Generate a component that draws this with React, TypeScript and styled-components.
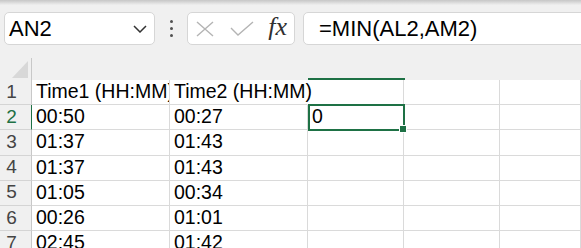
import React, { FunctionComponent } from 'react'
import styled, { createGlobalStyle } from 'styled-components'

const GlobalStyle = createGlobalStyle`
  html, body {
    margin: 0;
    padding: 0;
    background: #ffffff;
    overflow: hidden;
    font-family: 'Liberation Sans', Arial, sans-serif;
  }
`

const Page = styled.div`
  width: 581px;
  height: 248px;
  overflow: hidden;
  background: #f0f0f0;
`

const TopShade = styled.div`
  height: 5px;
  background: linear-gradient(#c6c6c6, #efefef);
`

const Toolbar = styled.div`
  display: flex;
  align-items: center;
  height: 33px;
  padding: 7px 0 0 4px;
`

const Box = styled.div<{ $width?: number }>`
  box-sizing: border-box;
  height: 33px;
  display: flex;
  align-items: center;
  background: #ffffff;
  border: 1px solid #d6d6d6;
  border-radius: 5px;
  ${(p) => (p.$width ? `width: ${p.$width}px; flex: none;` : 'flex: 1; margin-right: -12px;')}
`

const NameText = styled.span`
  flex: 1;
  padding-left: 4px;
  font-size: 22px;
  color: #000;
`

const Chevron = styled.svg`
  margin-right: 7px;
`

const Dots = styled.div`
  width: 32px;
  display: flex;
  flex-direction: column;
  align-items: center;
  gap: 4px;
  & > span {
    width: 3px;
    height: 3px;
    border-radius: 50%;
    background: #505050;
  }
`

const FxBox = styled(Box)`
  justify-content: space-between;
  padding: 0 7px 0 7px;
  margin-right: 8px;
`

const Fx = styled.span`
  font-family: 'Liberation Serif', 'DejaVu Serif', serif;
  font-style: italic;
  font-size: 26px;
  color: #303030;
  margin-top: -3px;
`

const Formula = styled.span`
  padding-left: 15px;
  font-size: 22px;
  color: #000;
`

const HeaderRow = styled.div`
  display: grid;
  grid-template-columns: 32px 138px 138px 97px 96px 1fr;
  height: 34px;
  margin-top: 1px;
  align-items: end;
`

const Corner = styled.div`
  position: relative;
  box-sizing: border-box;
  height: 22px;
  border-right: 1px solid #c8c8c8;
  &::after {
    content: '';
    position: absolute;
    right: 3px;
    bottom: 2px;
    width: 0;
    height: 0;
    border-left: 16px solid transparent;
    border-bottom: 17px solid #d8d8d8;
  }
`

const ColMark = styled.div<{ $active?: boolean }>`
  height: 2px;
  background: ${(p) => (p.$active ? '#1e7145' : 'transparent')};
`

const Sheet = styled.div`
  display: grid;
  grid-template-columns: 32px 138px 138px 96px 96px 1fr;
  grid-auto-rows: 25.2px;
  background: #ffffff;
`

const RowHead = styled.div<{ $active?: boolean }>`
  box-sizing: border-box;
  display: flex;
  align-items: center;
  justify-content: center;
  padding-right: 8px;
  padding-bottom: 1px;
  background: #f0f0f0;
  border-bottom: 1px solid #d4d4d4;
  border-right: 1px solid ${(p) => (p.$active ? '#1e7145' : '#c8c8c8')};
  font-size: 19px;
  color: ${(p) => (p.$active ? '#1e7145' : '#444444')};
`

const Cell = styled.div<{ $spill?: boolean; $selected?: boolean }>`
  position: relative;
  box-sizing: border-box;
  display: flex;
  align-items: center;
  padding: 0 0 1px 4px;
  font-size: 19.5px;
  color: #000;
  white-space: nowrap;
  border-bottom: 1px solid #dadada;
  border-right: 1px solid ${(p) => (p.$spill ? 'transparent' : '#dadada')};
  overflow: ${(p) => (p.$spill || p.$selected ? 'visible' : 'hidden')};
  z-index: ${(p) => (p.$spill || p.$selected ? 1 : 0)};
  ${(p) =>
    p.$selected &&
    `
    &::before {
      content: '';
      position: absolute;
      left: 0;
      top: -1px;
      right: -2px;
      bottom: -2px;
      border: 2px solid #1e7145;
    }
    &::after {
      content: '';
      position: absolute;
      right: -4px;
      bottom: -4px;
      width: 6px;
      height: 6px;
      background: #1e7145;
      border: 1px solid #ffffff;
    }
  `}
`

const rows: string[][] = [
  ['Time1 (HH:MM)', 'Time2 (HH:MM)', ''],
  ['00:50', '00:27', '0'],
  ['01:37', '01:43', ''],
  ['01:37', '01:43', ''],
  ['01:05', '00:34', ''],
  ['00:26', '01:01', ''],
  ['02:45', '01:42', ''],
]

const App: FunctionComponent = () => {
  return (
    <Page>
      <GlobalStyle />
      <TopShade />
      <Toolbar>
        <Box $width={151}>
          <NameText>AN2</NameText>
          <Chevron width="14" height="8" viewBox="0 0 14 8">
            <path d="M1 1 L7 7 L13 1" fill="none" stroke="#333" strokeWidth="1.5" />
          </Chevron>
        </Box>
        <Dots>
          <span />
          <span />
          <span />
        </Dots>
        <FxBox $width={108}>
          <svg width="20" height="16" viewBox="0 0 20 16">
            <path d="M2 1 L18 15 M18 1 L2 15" stroke="#b4b4b4" strokeWidth="1.4" fill="none" />
          </svg>
          <svg width="24" height="16" viewBox="0 0 24 16">
            <path d="M1 7 L8 14 L23 1" stroke="#b4b4b4" strokeWidth="1.4" fill="none" />
          </svg>
          <Fx>fx</Fx>
        </FxBox>
        <Box>
          <Formula>=MIN(AL2,AM2)</Formula>
        </Box>
      </Toolbar>
      <HeaderRow>
        <Corner />
        <ColMark />
        <ColMark />
        <ColMark $active />
        <ColMark />
        <ColMark />
      </HeaderRow>
      <Sheet>
        {rows.map((r, i) => (
          <React.Fragment key={i}>
            <RowHead $active={i === 1}>{i + 1}</RowHead>
            <Cell>{r[0]}</Cell>
            <Cell $spill={i === 0}>{r[1]}</Cell>
            <Cell $selected={i === 1}>{r[2]}</Cell>
            <Cell />
            <Cell />
          </React.Fragment>
        ))}
      </Sheet>
    </Page>
  )
}

export default App
